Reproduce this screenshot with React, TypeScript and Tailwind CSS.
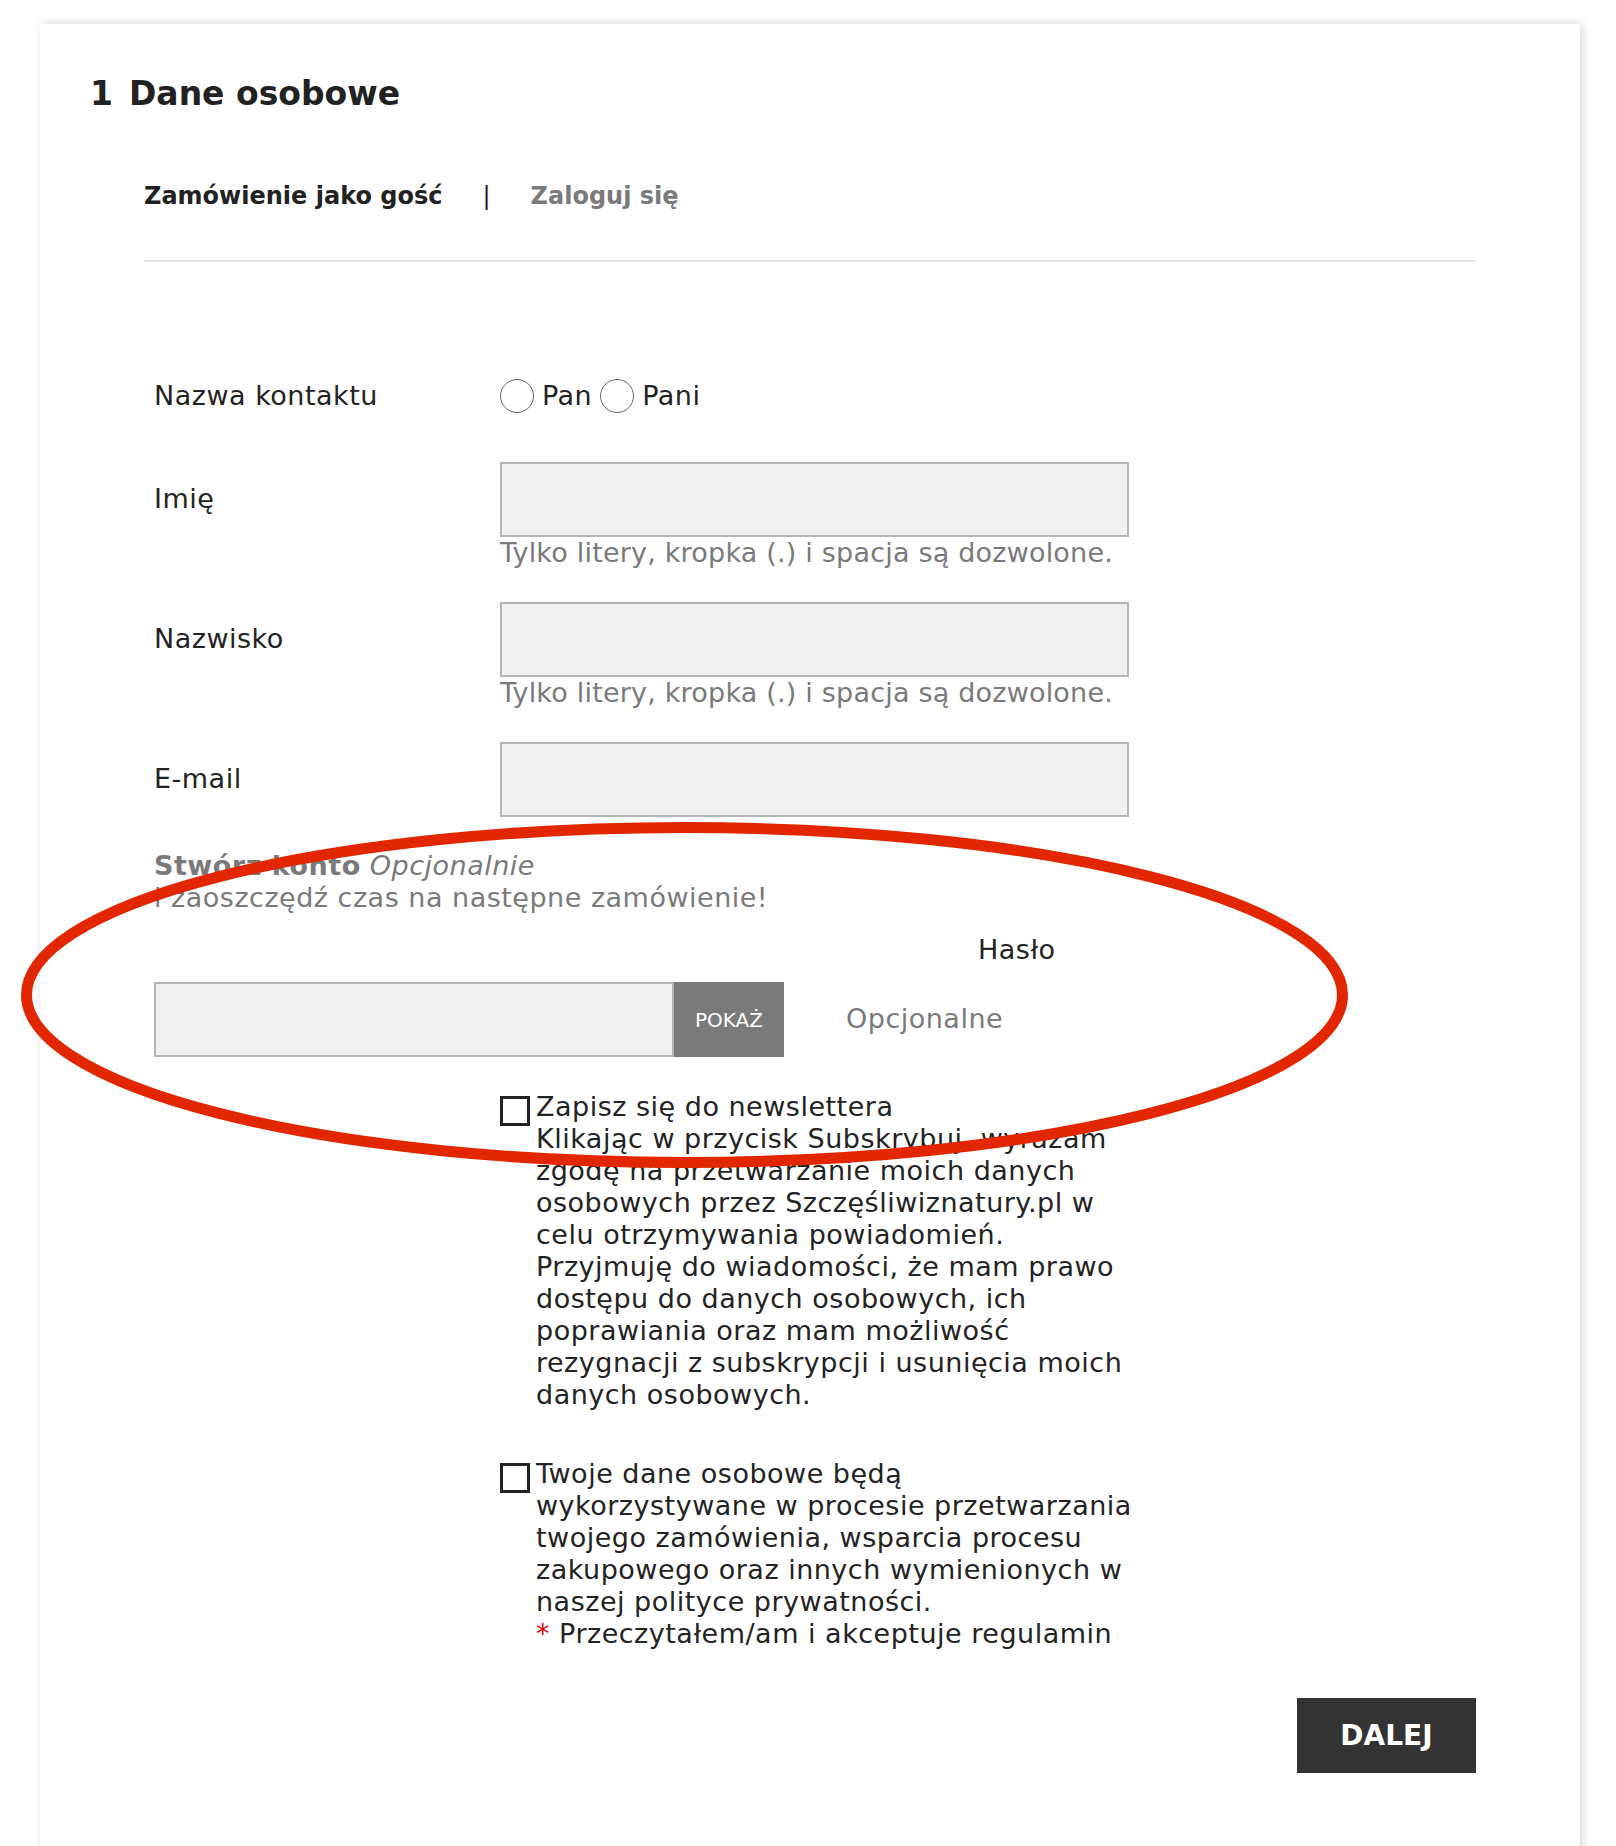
import React from "react";

const font = { fontFamily: "'DejaVu Sans', 'Noto Sans', sans-serif" };

function Radio({ label }: { label: string }) {
  return (
    <label className="flex items-center gap-[8px]">
      <span className="block w-[34px] h-[34px] rounded-full border-[1.5px] border-[#666666] bg-white" />
      <span className="text-[27px] tracking-[0.5px] text-[#232323] leading-[34px]">{label}</span>
    </label>
  );
}

function Field({ label, hint }: { label: string; hint?: string }) {
  return (
    <div className="flex">
      <div className="w-[346px] shrink-0 h-[75px] flex items-center text-[27px] tracking-[0.5px] text-[#232323]">{label}</div>
      <div className="w-[629px]">
        <div className="h-[75px] w-full bg-[#f1f1f1] border-2 border-[#b5b5b5]" />
        {hint && <div className="text-[27px] tracking-[0.2px] leading-[32px] text-[#7a7a7a] whitespace-nowrap">{hint}</div>}
      </div>
    </div>
  );
}

function Check({ lines, className }: { lines: React.ReactNode[]; className?: string }) {
  return (
    <div className={"flex ml-[346px] " + (className ?? "")}>
      <span className="block w-[30px] h-[30px] mt-[5px] border-[3px] border-[#222222] shrink-0" />
      <div className="ml-[6px] text-[27px] tracking-[0.5px] leading-[32px] text-[#232323]">
        {lines.map((l, i) => (
          <div key={i} className="whitespace-nowrap">{l}</div>
        ))}
      </div>
    </div>
  );
}

export default function App() {
  return (
    <div className="relative w-[1616px] min-h-[1846px] bg-white overflow-hidden" style={font}>
      <div className="ml-[40px] mt-[24px] w-[1540px] bg-white pl-[50px] pr-[104px] pt-[50px] pb-[120px] shadow-[3px_0_10px_rgba(0,0,0,0.13),0_-2px_10px_rgba(0,0,0,0.04)]">
        <h1 className="h-[40px] leading-[40px] text-[33px] font-bold text-[#222222] flex">
          <span>1</span>
          <span className="ml-[16px]">Dane osobowe</span>
        </h1>

        <div className="ml-[54px]">
          <div className="mt-[67px] h-[30px] leading-[30px] flex items-center text-[24px] font-bold">
            <span className="text-[#222222]">Zamówienie jako gość</span>
            <span className="ml-[40px] text-[#222222] font-normal">|</span>
            <span className="ml-[40px] text-[#7a7a7a]">Zaloguj się</span>
          </div>
          <div className="mt-[49px] h-[2px] bg-[#e2e2e2]" />

          <div className="ml-[10px]">
            <div className="mt-[117px] flex items-center h-[34px]">
              <div className="w-[346px] shrink-0 text-[27px] tracking-[0.5px] text-[#232323]">Nazwa kontaktu</div>
              <div className="flex items-center gap-[8px]">
                <Radio label="Pan" />
                <Radio label="Pani" />
              </div>
            </div>

            <div className="mt-[49px]">
              <Field label="Imię" hint="Tylko litery, kropka (.) i spacja są dozwolone." />
            </div>
            <div className="mt-[33px]">
              <Field label="Nazwisko" hint="Tylko litery, kropka (.) i spacja są dozwolone." />
            </div>
            <div className="mt-[33px]">
              <Field label="E-mail" />
            </div>

            <div className="mt-[33px] text-[27px] tracking-[0.5px] leading-[32px] text-[#7a7a7a]">
              <div>
                <span className="font-bold">Stwórz konto</span> <span className="italic">Opcjonalnie</span>
              </div>
              <div>i zaoszczędź czas na następne zamówienie!</div>
            </div>

            <div className="mt-[20px] ml-[824px] text-[27px] tracking-[0.5px] leading-[32px] text-[#232323]">Hasło</div>

            <div className="mt-[16px] flex items-center">
              <div className="flex h-[75px]">
                <div className="w-[520px] h-full bg-[#f1f1f1] border-2 border-[#b5b5b5]" />
                <div className="w-[110px] h-full bg-[#7a7a7a] text-white text-[20px] flex items-center justify-center">POKAŻ</div>
              </div>
              <div className="ml-[62px] text-[27px] tracking-[0.5px] text-[#7a7a7a]">Opcjonalne</div>
            </div>

            <Check
              className="mt-[34px]"
              lines={[
                "Zapisz się do newslettera",
                "Klikając w przycisk Subskrybuj, wyrażam",
                "zgodę na przetwarzanie moich danych",
                "osobowych przez Szczęśliwiznatury.pl w",
                "celu otrzymywania powiadomień.",
                "Przyjmuję do wiadomości, że mam prawo",
                "dostępu do danych osobowych, ich",
                "poprawiania oraz mam możliwość",
                "rezygnacji z subskrypcji i usunięcia moich",
                "danych osobowych.",
              ]}
            />

            <Check
              className="mt-[47px]"
              lines={[
                "Twoje dane osobowe będą",
                "wykorzystywane w procesie przetwarzania",
                "twojego zamówienia, wsparcia procesu",
                "zakupowego oraz innych wymienionych w",
                "naszej polityce prywatności.",
                <span key="r">
                  <span className="text-[#e00000]">*</span> Przeczytałem/am i akceptuje regulamin
                </span>,
              ]}
            />
          </div>

          <div className="mt-[48px] flex justify-end">
            <button className="w-[179px] h-[75px] bg-[#333333] text-white text-[28px] font-bold">DALEJ</button>
          </div>
        </div>
      </div>

      <svg className="absolute left-0 top-0 pointer-events-none" width="1616" height="1846" viewBox="0 0 1616 1846">
        <ellipse cx="684.5" cy="995" rx="658" ry="167.5" fill="none" stroke="#e12600" strokeWidth="11" />
      </svg>
    </div>
  );
}
